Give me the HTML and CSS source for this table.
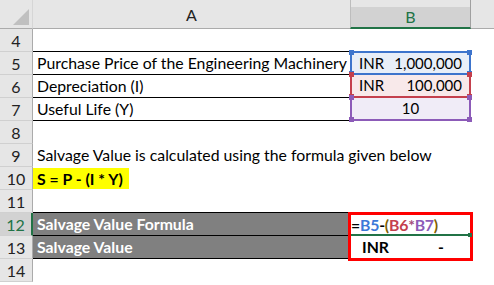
FILE: index.html
```html
<!DOCTYPE html>
<html>
<head>
<meta charset="utf-8">
<link rel="stylesheet" href="styles.css">
</head>
<body>
<div class="sheet">
  <div class="corner"><span class="tri"></span></div>
  <div class="colhead">A</div>
  <div class="colhead sel">B</div>
  <div class="colhead rest"></div>

  <div class="rowhead">4</div><div class="cell"></div><div class="cell"></div><div class="cell"></div>

  <div class="rowhead">5</div><div class="cell txt bt bb">Purchase Price of the Engineering Machinery</div>
  <div class="cell bcell blue"><span class="cur">INR</span><span class="num">1,000,000</span><i class="sq tl"></i><i class="sq tr"></i><i class="sq bl"></i><i class="sq br"></i></div><div class="cell"></div>

  <div class="rowhead">6</div><div class="cell txt bb">Depreciation (I)</div>
  <div class="cell bcell red"><span class="cur">INR</span><span class="num">100,000</span><i class="sq tl"></i><i class="sq tr"></i><i class="sq bl"></i><i class="sq br"></i></div><div class="cell"></div>

  <div class="rowhead">7</div><div class="cell txt bb">Useful Life (Y)</div>
  <div class="cell bcell purple center">10<i class="sq tl"></i><i class="sq tr"></i><i class="sq bl"></i><i class="sq br"></i></div><div class="cell"></div>

  <div class="rowhead">8</div><div class="cell"></div><div class="cell"></div><div class="cell"></div>

  <div class="rowhead">9</div><div class="cell txt over">Salvage Value is calculated using the formula given below</div><div class="cell"></div><div class="cell"></div>

  <div class="rowhead">10</div><div class="cell txt"><span class="hl">S = P - (I * Y)</span></div><div class="cell"></div><div class="cell"></div>

  <div class="rowhead">11</div><div class="cell"></div><div class="cell"></div><div class="cell"></div>

  <div class="rowhead active">12</div><div class="cell txt dark bt bb">Salvage Value Formula</div>
  <div class="redbox">
    <div class="formula">=<span class="c-blue">B5</span>-<span class="c-par">(</span><span class="c-red">B6</span><span class="c-mul">*</span><span class="c-purple">B7</span><span class="c-par">)</span><i class="gsq"></i></div>
    <div class="result"><span>INR</span><span class="dash">-</span></div>
  </div>
  <div class="cell"></div>

  <div class="rowhead">13</div><div class="cell txt dark bb">Salvage Value</div><div class="cell"></div>

  <div class="rowhead">14</div><div class="cell"></div><div class="cell"></div><div class="cell"></div>
</div>
</body>
</html>
```
FILE: styles.css
```css
* { box-sizing: border-box; }
html, body { margin: 0; padding: 0; background: #ffffff; }
body {
  font-family: "Lato", "Open Sans", sans-serif;
  font-size: 15.8px;
  color: #000;
  width: 494px;
  height: 285px;
  overflow: hidden;
}
.sheet {
  display: grid;
  grid-template-columns: 33px 317px 121px 23px;
  grid-template-rows: 29px repeat(11, 23px);
}
.corner {
  background: #e6e6e6;
  border-right: 1px solid #d6d6d6;
  border-bottom: 1px solid #ababab;
  position: relative;
}
.tri {
  position: absolute;
  right: 3px;
  bottom: 3px;
  width: 0;
  height: 0;
  border-left: 16px solid transparent;
  border-bottom: 16px solid #c0c0c0;
}
.colhead {
  background: #e6e6e6;
  border-bottom: 1px solid #ababab;
  text-align: center;
  font-size: 16px;
  line-height: 30px;
  color: #222;
}
.colhead.sel {
  background: linear-gradient(#e6e6e6 0 7px, #d2d2d2 7px);
  border-left: 1px solid #bdbdbd;
  border-right: 1px solid #a0a0a0;
  border-bottom: 2px solid #217346;
  color: #217346;
  line-height: 34px;
}
.colhead.rest { background: #e6e6e6; }
.rowhead {
  background: #e6e6e6;
  border-right: 1px solid #ababab;
  border-bottom: 1px solid #d0d0d0;
  text-align: center;
  font-size: 16px;
  line-height: 23px;
  color: #222;
}
.rowhead.active {
  background: #d2d2d2;
  color: #217346;
  border-right: 2px solid #217346;
}
.cell {
  position: relative;
  line-height: 22px;
  white-space: nowrap;
}
.txt { padding-left: 4px; }
.over { overflow: visible; z-index: 1; }
.bt { border-top: 1px solid #000; margin-top: -1px; }
.bb { border-bottom: 1px solid #000; }
.hl {
  display: inline-block;
  background: #ffff00;
  font-weight: 700;
  margin-left: -4px;
  padding: 0 6px 0 4px;
  line-height: 21px;
  margin-top: 1px;
}
.dark {
  background: #808080;
  color: #ffffff;
  font-weight: 700;
}
.bcell {
  display: flex;
  justify-content: space-between;
  padding: 0 7px 0 7px;
  border: 2px solid;
  line-height: 20px;
  font-size: 15px;
}
.bcell.center { justify-content: center; }
.blue { background: #e8eef8; border-color: #3d74cc; }
.red { background: #f8e9ea; border-color: #c4404d; border-top: 0; }
.purple { background: #f0ecf7; border-color: #8c5bb8; border-top: 0; }
.blue { margin-top: -1px; }
.sq {
  position: absolute;
  width: 5px;
  height: 5px;
}
.blue .sq { background: #3d74cc; }
.red .sq { background: #c4404d; }
.purple .sq { background: #8c5bb8; }
.sq.tl { left: -3px; top: -3px; }
.sq.tr { right: -3px; top: -3px; }
.sq.bl { left: -3px; bottom: -3px; }
.sq.br { right: -3px; bottom: -3px; }
.redbox {
  grid-row: span 2;
  border: 3px solid #ff0000;
  margin: -1px -2px -2px -2px;
  position: relative;
  z-index: 2;
  background: #fff;
  font-weight: 700;
}
.formula {
  height: 21px;
  line-height: 20px;
  border-bottom: 2px solid #217346;
  position: relative;
  white-space: nowrap;
  letter-spacing: -0.2px;
}
.c-blue { color: #3c78d8; }
.c-red { color: #c4404d; }
.c-purple { color: #8c5bb8; }
.c-mul { color: #a64d79; }
.c-par { color: #7f6000; }
.gsq {
  position: absolute;
  right: -2px;
  bottom: -3px;
  width: 4px;
  height: 4px;
  background: #217346;
}
.result {
  display: flex;
  justify-content: space-between;
  padding: 0 26px 0 11px;
  line-height: 22px;
}
```
